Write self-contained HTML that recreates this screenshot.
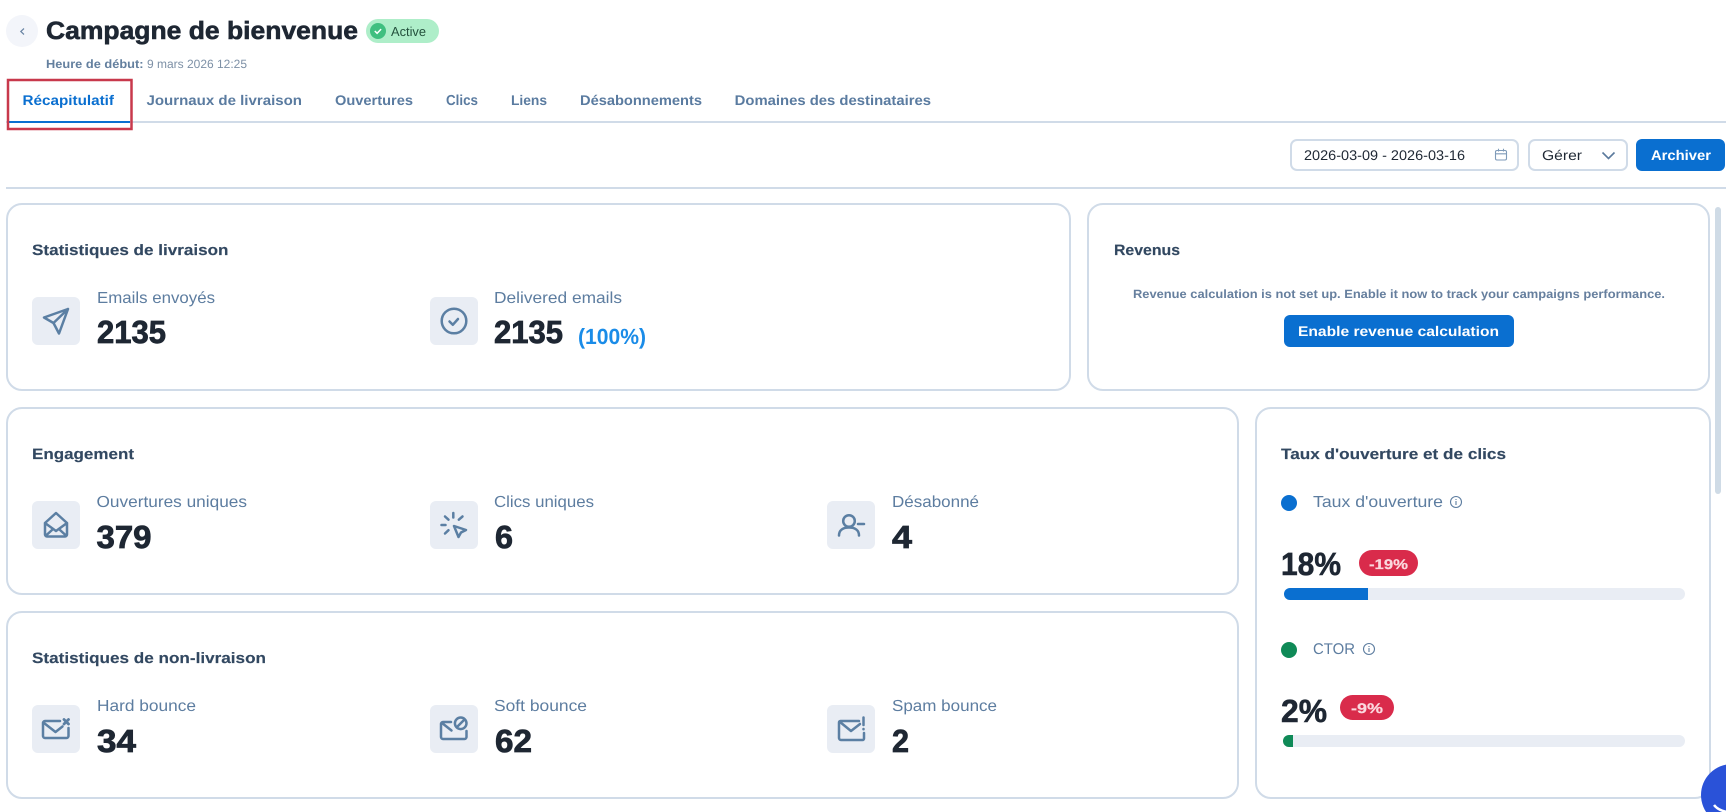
<!DOCTYPE html>
<html lang="fr">
<head>
<meta charset="utf-8">
<title>Campagne de bienvenue</title>
<style>
html,body{margin:0;padding:0;background:#fff;width:1726px;height:812px;overflow:hidden}
svg{display:block;position:absolute;left:0;top:0}
text{font-family:"Liberation Sans",sans-serif;text-rendering:geometricPrecision}
.card{fill:#fff;stroke:#d0dbe8;stroke-width:2}
.ib{fill:#e9edf4}
.ic{fill:none;stroke:#5b7fa3;stroke-width:2.5;stroke-linecap:round;stroke-linejoin:round}
.h{font-size:15px;font-weight:700;fill:#324861;stroke:#324861;stroke-width:.15}
.l{font-size:16px;fill:#5d7da0}
.n{font-size:32px;font-weight:700;fill:#1e2733;stroke:#1e2733;stroke-width:.8}
.t{font-size:14px;font-weight:700;fill:#5a7ba0}
.w{font-weight:700;fill:#fff}
.bd{font-size:14px;font-weight:700;fill:#fbd8de;stroke:#fbd8de;stroke-width:.25}
</style>
</head>
<body>
<svg width="1726" height="812" viewBox="0 0 1726 812" xmlns="http://www.w3.org/2000/svg">
  <!-- header -->
  <circle cx="22" cy="31" r="16" fill="#f3f5fa"/>
  <path d="M24 28.500 L20.800 31.500 L24 34.500" fill="none" stroke="#6b86a5" stroke-width="1.200"/>
  <text x="46" y="39" font-size="25" font-weight="700" fill="#1e2733" stroke="#1e2733" stroke-width=".6" textLength="312" lengthAdjust="spacingAndGlyphs">Campagne de bienvenue</text>
  <rect x="366" y="19" width="73" height="24" rx="12" fill="#aeeec9"/>
  <circle cx="378" cy="31" r="8" fill="#3fbf7f"/>
  <path d="M374.800 31 l2.300 2.300 l4-4.200" fill="none" stroke="#fff" stroke-width="1.500"/>
  <text x="391" y="36" font-size="13" fill="#23503c" textLength="35" lengthAdjust="spacingAndGlyphs">Active</text>
  <text x="46" y="68" font-size="12" font-weight="700" fill="#64809f" textLength="97.500" lengthAdjust="spacingAndGlyphs">Heure de début:</text>
  <text x="147" y="68" font-size="12" fill="#7d90a6" textLength="100" lengthAdjust="spacingAndGlyphs">9 mars 2026 12:25</text>

  <!-- tabs -->
  <text x="22.500" y="105" class="t" style="fill:#0a6fd0" textLength="91.500" lengthAdjust="spacingAndGlyphs">Récapitulatif</text>
  <text x="146.500" y="105" class="t" textLength="155.500" lengthAdjust="spacingAndGlyphs">Journaux de livraison</text>
  <text x="335" y="105" class="t" textLength="78" lengthAdjust="spacingAndGlyphs">Ouvertures</text>
  <text x="446" y="105" class="t" style="font-size:14.500px" textLength="32" lengthAdjust="spacingAndGlyphs">Clics</text>
  <text x="511" y="105" class="t" textLength="36" lengthAdjust="spacingAndGlyphs">Liens</text>
  <text x="580" y="105" class="t" textLength="122" lengthAdjust="spacingAndGlyphs">Désabonnements</text>
  <text x="734.700" y="105" class="t" textLength="196.300" lengthAdjust="spacingAndGlyphs">Domaines des destinataires</text>
  <rect x="6" y="121" width="1720" height="2" fill="#d0dbe8"/>
  <rect x="9" y="121" width="121" height="2" fill="#0a6fd0"/>
  <rect x="8" y="80" width="123.500" height="49" fill="none" stroke="#c8394c" stroke-width="2.500"/>

  <!-- toolbar -->
  <rect x="1291" y="140" width="227" height="30" rx="6" fill="#fff" stroke="#d0dbe8" stroke-width="2"/>
  <text x="1304" y="160" font-size="14" fill="#1e2733" textLength="161" lengthAdjust="spacingAndGlyphs">2026-03-09 - 2026-03-16</text>
  <g fill="none" stroke="#7e9ab8" stroke-width="1.100">
    <rect x="1495.500" y="150.500" width="11" height="9.500" rx="1.500"/>
    <path d="M1495.500 153.800 H1506.500 M1498.500 148.800 V151.500 M1503.500 148.800 V151.500"/>
  </g>
  <rect x="1529" y="140" width="98" height="30" rx="6" fill="#fff" stroke="#d0dbe8" stroke-width="2"/>
  <text x="1542" y="160" font-size="14" fill="#1e2733" textLength="40" lengthAdjust="spacingAndGlyphs">Gérer</text>
  <path d="M1602.500 152.500 L1608.500 158.500 L1614.500 152.500" fill="none" stroke="#5b7a9d" stroke-width="1.600"/>
  <rect x="1636" y="139" width="89" height="32" rx="6" fill="#0a6fd0"/>
  <text x="1651" y="160" font-size="14" class="w" textLength="60" lengthAdjust="spacingAndGlyphs">Archiver</text>
  <rect x="6" y="187" width="1720" height="2" fill="#d0dbe8"/>

  <!-- scrollbar -->
  <rect x="1715" y="207" width="6" height="287" rx="3" fill="#cfdbe6"/>

  <!-- cards -->
  <rect class="card" x="7" y="204" width="1063" height="186" rx="15"/>
  <rect class="card" x="1088" y="204" width="621" height="186" rx="15"/>
  <rect class="card" x="7" y="408" width="1231" height="186" rx="15"/>
  <rect class="card" x="1256" y="408" width="454" height="390" rx="15"/>
  <rect class="card" x="7" y="612" width="1231" height="186" rx="15"/>

  <!-- Statistiques de livraison -->
  <text x="32" y="255" class="h" textLength="196.500" lengthAdjust="spacingAndGlyphs">Statistiques de livraison</text>
  <rect class="ib" x="32" y="297" width="48" height="48" rx="6"/>
  <path class="ic" d="M68 309 L44 317.500 L53.500 323 L59 333.500 Z M53.500 323 L68 309"/>
  <text x="97" y="303" class="l" textLength="118" lengthAdjust="spacingAndGlyphs">Emails envoyés</text>
  <text x="97" y="343" class="n" textLength="69" lengthAdjust="spacingAndGlyphs">2135</text>
  <rect class="ib" x="430" y="297" width="48" height="48" rx="6"/>
  <circle class="ic" cx="454" cy="321" r="12.300"/>
  <path class="ic" d="M449.500 321.500 L452.800 324.800 L458 319"/>
  <text x="494" y="303" class="l" textLength="128" lengthAdjust="spacingAndGlyphs">Delivered emails</text>
  <text x="494" y="343" class="n" textLength="69" lengthAdjust="spacingAndGlyphs">2135</text>
  <text x="578" y="344" font-size="22" font-weight="700" fill="#1a8ce8" textLength="68" lengthAdjust="spacingAndGlyphs">(100%)</text>

  <!-- Revenus -->
  <text x="1114" y="255" class="h" textLength="66" lengthAdjust="spacingAndGlyphs">Revenus</text>
  <text x="1133" y="298" font-size="12" font-weight="700" fill="#667f9e" textLength="532" lengthAdjust="spacingAndGlyphs">Revenue calculation is not set up. Enable it now to track your campaigns performance.</text>
  <rect x="1284" y="315" width="230" height="32" rx="6" fill="#0a6fd0"/>
  <text x="1298" y="336" font-size="14" class="w" textLength="201" lengthAdjust="spacingAndGlyphs">Enable revenue calculation</text>

  <!-- Engagement -->
  <text x="32" y="459" class="h" textLength="102" lengthAdjust="spacingAndGlyphs">Engagement</text>
  <rect class="ib" x="32" y="501" width="48" height="48" rx="6"/>
  <path class="ic" d="M45 523 L56 513 L67 523 V534.500 a2 2 0 0 1-2 2 H47 a2 2 0 0 1-2-2 Z M45 523 L56 531 L67 523 M46 535.500 L52 530 M66 535.500 L60 530"/>
  <text x="96.500" y="507" class="l" textLength="150.500" lengthAdjust="spacingAndGlyphs">Ouvertures uniques</text>
  <text x="96.500" y="548" class="n" textLength="55" lengthAdjust="spacingAndGlyphs">379</text>
  <rect class="ib" x="430" y="501" width="48" height="48" rx="6"/>
  <path class="ic" d="M453.300 513 V517.500 M445 516.500 L448.500 519.700 M462.500 516.500 L458.800 519.700 M441.500 525 H445.500 M445 533.500 L448.500 530.200 M454 526 L466 530 L461 532.500 L458.500 537 Z"/>
  <text x="494" y="507" class="l" textLength="100" lengthAdjust="spacingAndGlyphs">Clics uniques</text>
  <text x="495" y="548" class="n" textLength="18" lengthAdjust="spacingAndGlyphs">6</text>
  <rect class="ib" x="827" y="501" width="48" height="48" rx="6"/>
  <path class="ic" d="M839 535.500 C839 530 843 527.500 849 527.500 C855 527.500 859 530 859 535.500 M858 524 H864"/>
  <circle class="ic" cx="849" cy="521" r="5.800"/>
  <text x="892" y="507" class="l" textLength="87" lengthAdjust="spacingAndGlyphs">Désabonné</text>
  <text x="892" y="548" class="n" textLength="20" lengthAdjust="spacingAndGlyphs">4</text>

  <!-- Non-livraison -->
  <text x="32" y="663" class="h" textLength="234" lengthAdjust="spacingAndGlyphs">Statistiques de non-livraison</text>
  <rect class="ib" x="32" y="705" width="48" height="48" rx="6"/>
  <path class="ic" d="M60 721 H45 a2 2 0 0 0-2 2 V736 a2 2 0 0 0 2 2 H66.500 a2 2 0 0 0 2-2 V728 M44 723 L55.500 732 L62.500 726.500"/>
  <path class="ic" style="stroke-width:2.800" d="M64 719.500 L68.500 724 M68.500 719.500 L64 724"/>
  <text x="97" y="711" class="l" textLength="99" lengthAdjust="spacingAndGlyphs">Hard bounce</text>
  <text x="97" y="752" class="n" textLength="39" lengthAdjust="spacingAndGlyphs">34</text>
  <rect class="ib" x="430" y="705" width="48" height="48" rx="6"/>
  <path class="ic" d="M451 722 H443 a2 2 0 0 0-2 2 V737 a2 2 0 0 0 2 2 H464.500 a2 2 0 0 0 2-2 V731 M442 723 L451.500 730.500"/>
  <circle class="ic" cx="460.700" cy="723.300" r="5.800"/>
  <path class="ic" d="M457.500 726.500 L464 720"/>
  <text x="494" y="711" class="l" textLength="93" lengthAdjust="spacingAndGlyphs">Soft bounce</text>
  <text x="495" y="752" class="n" textLength="37" lengthAdjust="spacingAndGlyphs">62</text>
  <rect class="ib" x="827" y="705" width="48" height="48" rx="6"/>
  <path class="ic" d="M859 721 H840.500 a1.500 1.500 0 0 0-1.500 1.500 V738 a2 2 0 0 0 2 2 H862.500 a1.500 1.500 0 0 0 1.500-1.500 V733 M840 722 L851 731 L860 724 M863.500 717.500 V725 M863.500 729 V729.300"/>
  <text x="892" y="711" class="l" textLength="105" lengthAdjust="spacingAndGlyphs">Spam bounce</text>
  <text x="892" y="752" class="n" textLength="17" lengthAdjust="spacingAndGlyphs">2</text>

  <!-- Taux -->
  <text x="1281" y="459" class="h" textLength="225" lengthAdjust="spacingAndGlyphs">Taux d'ouverture et de clics</text>
  <circle cx="1289" cy="503" r="8" fill="#0a6fd0"/>
  <text x="1313" y="507" class="l" textLength="130" lengthAdjust="spacingAndGlyphs">Taux d'ouverture</text>
  <g fill="none" stroke="#5d7da0" stroke-width="1.100">
    <circle cx="1456" cy="502" r="5.500"/>
    <path d="M1456 501 V505 M1456 499 V500"/>
    <circle cx="1369" cy="649" r="5.500"/>
    <path d="M1369 648 V652 M1369 646 V647"/>
  </g>
  <text x="1281" y="575" font-size="32" font-weight="700" fill="#1e2733" stroke="#1e2733" stroke-width=".6" textLength="60" lengthAdjust="spacingAndGlyphs">18%</text>
  <rect x="1359" y="550" width="59" height="26" rx="13" fill="#d92b4b"/>
  <text x="1369" y="569" class="bd" textLength="39" lengthAdjust="spacingAndGlyphs">-19%</text>
  <rect x="1284" y="588" width="401" height="12" rx="6" fill="#e9edf4"/>
  <path d="M1368 588 H1290 a6 6 0 0 0 0 12 H1368 Z" fill="#0a6fd0"/>

  <circle cx="1289" cy="650" r="8" fill="#0f8a57"/>
  <text x="1313" y="654" font-size="15.500" fill="#5d7da0" textLength="42" lengthAdjust="spacingAndGlyphs">CTOR</text>
  <text x="1281" y="722" font-size="32" font-weight="700" fill="#1e2733" stroke="#1e2733" stroke-width=".6" textLength="46" lengthAdjust="spacingAndGlyphs">2%</text>
  <rect x="1340" y="695" width="54" height="25" rx="12.500" fill="#d92b4b"/>
  <text x="1351" y="713" class="bd" textLength="32" lengthAdjust="spacingAndGlyphs">-9%</text>
  <rect x="1283" y="735" width="402" height="12" rx="6" fill="#e9edf4"/>
  <path d="M1293 735 H1289 a6 6 0 0 0 0 12 H1293 Z" fill="#0f8a57"/>

  <!-- chat bubble -->
  <circle cx="1732" cy="795" r="31" fill="#2a52d8"/>
  <path d="M1714 805 C1717 809 1722 811 1727 812" fill="none" stroke="#fff" stroke-width="2.500"/>
</svg>
</body>
</html>
